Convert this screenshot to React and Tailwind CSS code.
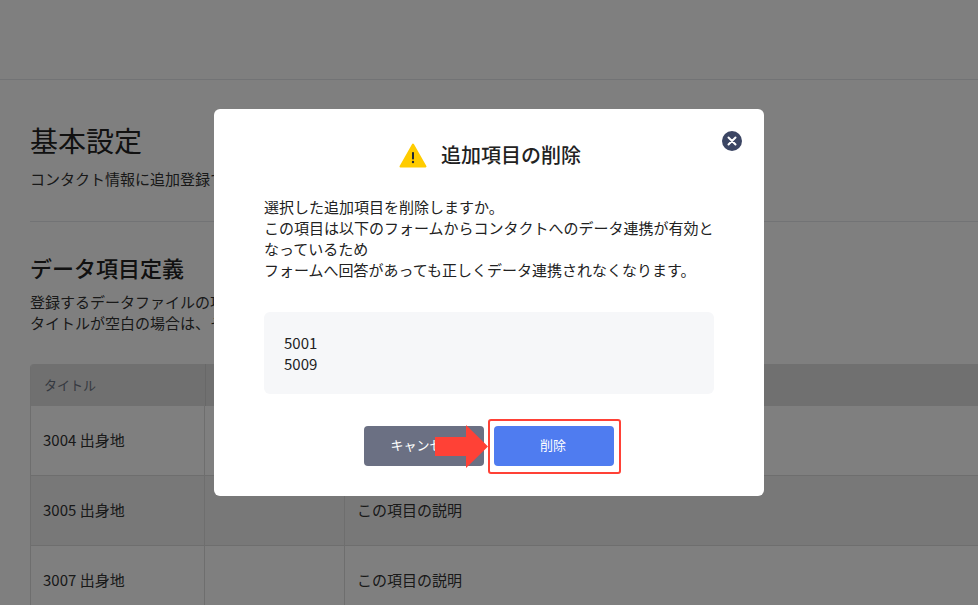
const font = { fontFamily: '"Noto Sans CJK JP", "Noto Sans", sans-serif' };

function Row({ title, dark, desc }) {
  return (
    <div className={`flex h-[70px] items-center border-b border-[#dddddd] text-[15px] text-[#333333] ${dark ? "bg-[#f1f1f1]" : "bg-white"}`}>
      <div className="flex h-full w-[174px] shrink-0 items-center border-r border-[#dddddd] pl-[12px]">{title}</div>
      <div className="flex h-full w-[140px] shrink-0 items-center border-r border-[#dddddd]"></div>
      <div className="pl-[12px]">{desc}</div>
    </div>
  );
}

export default function App() {
  return (
    <div className="relative h-[605px] w-[978px] overflow-hidden bg-white" style={font}>
      <div className="h-[80px] border-b border-[#e5e7eb]"></div>
      <div className="pl-[30px]">
        <h1 className="mt-[40px] text-[28px] leading-[40px] text-[#222222]">基本設定</h1>
        <p className="mt-[8px] text-[15px] leading-[21px] text-[#333333]">コンタクト情報に追加登録するデータ項目を定義します。</p>
        <div className="mt-[32px] h-px bg-[#e5e7eb]"></div>
        <h2 className="mt-[29px] text-[22px] leading-[32px] font-medium text-[#222222]">データ項目定義</h2>
        <p className="mt-[8px] text-[15px] leading-[21px] text-[#333333]">登録するデータファイルの項目を設定します。<br />タイトルが空白の場合は、その項目は使用されません。</p>
        <div className="mt-[31px] overflow-hidden rounded-tl-[4px] border-l border-[#dddddd]">
          <div className="flex h-[42px] items-center bg-[#e0e0e0] text-[13px] text-[#6b7280]">
            <div className="flex h-full w-[175px] items-center border-r border-[#d0d0d0] pl-[13px]">タイトル</div>
            <div className="h-full w-[140px] border-r border-[#d0d0d0]"></div>
          </div>
          <Row title="3004 出身地" desc="この項目の説明" />
          <Row title="3005 出身地" desc="この項目の説明" dark />
          <Row title="3007 出身地" desc="この項目の説明" />
        </div>
      </div>

      <div className="absolute inset-0 flex items-center justify-center bg-black/50">
        <div className="relative flex h-[387px] w-[550px] flex-col rounded-[6px] bg-white px-[50px]">
          <button className="absolute top-[22px] right-[22px] flex h-5 w-5 items-center justify-center rounded-full bg-[#3b4563]">
            <svg width="10" height="10" viewBox="0 0 10 10"><path d="M1.5 1.5l7 7M8.5 1.5l-7 7" stroke="#fff" strokeWidth="2" strokeLinecap="round" /></svg>
          </button>
          <div className="mt-[30px] flex h-[32px] items-center justify-center gap-[14px] pl-[2px]">
            <svg width="28" height="25" viewBox="0 0 28 25">
              <path d="M14 1.5L26.5 23.5H1.5z" fill="#ffcc00" stroke="#ffcc00" strokeWidth="2" strokeLinejoin="round" />
              <rect x="13" y="9" width="2" height="7.5" rx="0.8" fill="#1f2937" />
              <circle cx="14" cy="19" r="1.2" fill="#1f2937" />
            </svg>
            <h3 className="text-[20px] leading-[32px] font-medium text-[#222222]">追加項目の削除</h3>
          </div>
          <p className="mt-[25px] text-[15px] leading-[21.1px] text-[#222222]">
            選択した追加項目を削除しますか。<br />
            この項目は以下のフォームからコンタクトへのデータ連携が有効となっているため<br />
            フォームへ回答があっても正しくデータ連携されなくなります。
          </p>
          <div className="mt-[31.4px] rounded-[6px] bg-[#f6f7f9] px-5 py-[20px] text-[15px] leading-[21px] text-[#222222]">
            <div>5001</div>
            <div>5009</div>
          </div>
          <div className="mt-[32px] flex justify-center gap-[10px]">
            <button className="h-[40px] w-[120px] rounded-[4px] bg-[#6b7083] pr-[2px] pb-[3px] text-[13px] text-white">キャンセル</button>
            <button className="h-[40px] w-[120px] rounded-[4px] bg-[#4f7cf0] pr-[2px] pb-[3px] text-[13px] text-white">削除</button>
          </div>
          <div className="absolute top-[310px] left-[274px] h-[55px] w-[133px] rounded-[3px] border-2 border-[#ff4136]"></div>
          <svg className="absolute top-[316px] left-[221px]" width="53" height="43" viewBox="0 0 53 43">
            <path d="M0 12h31V0l22 21.5L31 43V31H0z" fill="#ff4136" />
          </svg>
        </div>
      </div>
    </div>
  );
}
